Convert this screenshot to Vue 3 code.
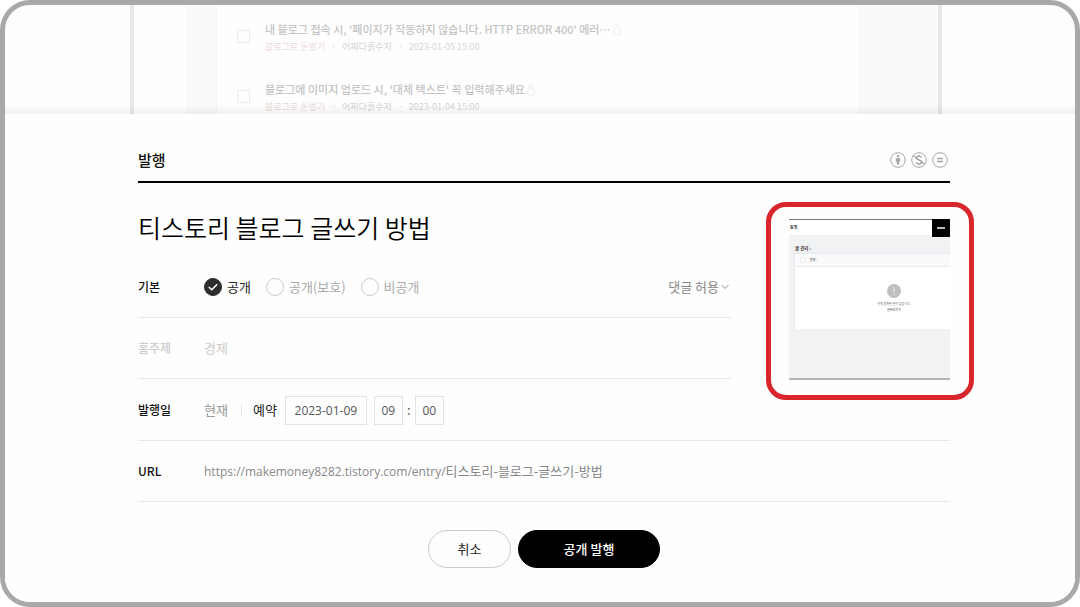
<template>
  <div class="frame">
    <section class="backdrop" aria-label="글 목록">
      <div class="board">
        <ul class="post-list">
          <li v-for="p in posts" :key="p.date" class="post">
            <input type="checkbox" class="post-check" :aria-label="p.title" />
            <div class="post-body">
              <div class="post-title">
                {{ p.title }}
                <svg class="lock" width="8" height="12" viewBox="0 0 8 12" fill="none" stroke="#eee">
                  <rect x="1" y="4" width="6" height="7" rx="1" />
                  <path d="M2 4V2.5a2 2 0 0 1 4 0V4" />
                </svg>
              </div>
              <div class="post-meta">
                <span class="category">블로그로 돈벌기</span>
                <span class="dot">·</span>
                <span>어쩌다흙수저</span>
                <span class="dot">·</span>
                <span>{{ p.date }}</span>
              </div>
            </div>
          </li>
        </ul>
      </div>
    </section>

    <form class="publish" @submit.prevent>
      <div class="inner">
        <header class="head">
          <h1 class="head-title">발행</h1>
          <div class="ccl">
            <svg width="16" height="16" viewBox="0 0 16 16" fill="none" stroke="#a6a6a6">
              <circle cx="8" cy="8" r="7.3" />
              <circle cx="8" cy="4.3" r="1.2" fill="#a6a6a6" stroke="none" />
              <path d="M5.8 6.2h4.4v3.2h-1v3.2H6.8V9.4h-1z" fill="#a6a6a6" stroke="none" />
            </svg>
            <svg width="16" height="16" viewBox="0 0 16 16" fill="none" stroke="#a6a6a6">
              <circle cx="8" cy="8" r="7.3" />
              <path d="M10.6 5.6C10.2 4.6 9.2 4.2 8 4.2c-1.5 0-2.5.7-2.5 1.8C5.5 8.4 10.7 7.4 10.7 10c0 1.2-1.2 1.9-2.7 1.9-1.4 0-2.5-.6-2.8-1.7M8 2.8v1.4M8 11.9v1.3" stroke-width="1.4" />
              <path d="M2.2 3.6l11.4 8.6" stroke-width="1.2" />
            </svg>
            <svg width="16" height="16" viewBox="0 0 16 16" fill="none" stroke="#a6a6a6">
              <circle cx="8" cy="8" r="7.3" />
              <path d="M5 6.5h6M5 9.5h6" stroke-width="1.3" />
            </svg>
          </div>
        </header>

        <div class="top">
          <div class="top-main">
            <h2 class="post-name">티스토리 블로그 글쓰기 방법</h2>
            <div class="row">
              <span class="label">기본</span>
              <div class="radios">
                <label v-for="o in options" :key="o.value" class="radio" :class="{ on: visibility === o.value }">
                  <input v-model="visibility" type="radio" name="visibility" :value="o.value" />
                  <svg v-if="visibility === o.value" class="check" width="18" height="18" viewBox="0 0 18 18" fill="none" stroke="#fff" stroke-width="1.5">
                    <path d="M4.8 9l3 2.8 5.4-5.6" />
                  </svg>
                  {{ o.text }}
                </label>
              </div>
              <div class="comment">
                <select v-model="comment" aria-label="댓글">
                  <option>댓글 허용</option>
                  <option>댓글 비허용</option>
                </select>
                <svg width="8" height="6" viewBox="0 0 8 6" fill="none" stroke="#909090">
                  <path d="M.5 1L4 4.5 7.5 1" />
                </svg>
              </div>
            </div>
            <div class="row disabled">
              <span class="label">홈주제</span>
              <span class="value">경제</span>
            </div>
          </div>

          <div class="thumb">
            <svg width="161" height="161" viewBox="0 0 161 161" role="img" aria-label="대표 이미지">
              <rect width="161" height="161" fill="#f1f2f4" />
              <rect width="161" height="16" fill="#fff" />
              <rect width="161" height="1" fill="#777" />
              <text x="1" y="10" font-size="4" font-weight="700" fill="#333">토핑</text>
              <text x="6" y="31" font-size="4.5" font-weight="700" fill="#333">글 관리 ›</text>
              <rect x="5" y="34" width="156" height="76" fill="#fff" />
              <rect x="5" y="34" width="156" height="13" fill="#f9fafb" />
              <path d="M5 34.5h156M5 47.5h156M5.5 34v76" stroke="#e9ebee" fill="none" />
              <rect x="12" y="39" width="4" height="4" fill="#fff" stroke="#ddd" stroke-width=".5" />
              <text x="21" y="42" font-size="3" fill="#444">변경 ›</text>
              <circle cx="105" cy="72" r="7" fill="#c0c0c0" />
              <path d="M105 68v5M105 74.5v1.5" stroke="#eee" />
              <text x="105" y="86" font-size="3" text-anchor="middle" fill="#666">아직 등록된 글이 없습니다.</text>
              <text x="105" y="92" font-size="3" text-anchor="middle" fill="#333">글쓰러가기</text>
              <rect y="159" width="161" height="2" fill="#b2b7b5" />
            </svg>
            <button type="button" class="thumb-del" aria-label="대표 이미지 삭제"></button>
            <div class="marker"></div>
          </div>
        </div>

        <div class="row">
          <span class="label">발행일</span>
          <div class="when">
            <button type="button" class="now">현재</button>
            <button type="button" class="reserve">예약</button>
            <input v-model="date" class="date" aria-label="예약 날짜" />
            <input v-model="hour" class="time" aria-label="시" />
            <span class="colon">:</span>
            <input v-model="minute" class="time" aria-label="분" />
          </div>
        </div>
        <div class="row">
          <span class="label">URL</span>
          <a class="url" href="#"><span class="base">https://makemoney8282.tistory.com/entry/</span>티스토리-블로그-글쓰기-방법</a>
        </div>

        <div class="actions">
          <button type="button" class="btn">취소</button>
          <button type="submit" class="btn primary">공개 발행</button>
        </div>
      </div>
    </form>
  </div>
</template>

<script setup>
import { ref } from 'vue'

const posts = [
  { title: "내 블로그 접속 시, '페이지가 작동하지 않습니다. HTTP ERROR 400' 에러…", date: '2023-01-05 15:00' },
  { title: "블로그에 이미지 업로드 시, '대체 텍스트' 꼭 입력해주세요", date: '2023-01-04 15:00' }
]
const options = [
  { value: 'public', text: '공개' },
  { value: 'protected', text: '공개(보호)' },
  { value: 'private', text: '비공개' }
]
const visibility = ref('public')
const comment = ref('댓글 허용')
const date = ref('2023-01-09')
const hour = ref('09')
const minute = ref('00')
</script>

<style>
body { background: #fff; }
</style>

<style scoped>
.frame, .frame * { box-sizing: border-box; }
.frame { min-height: 100vh; border: 5px solid #a9a9a9; border-radius: 30px; overflow: hidden; display: flex; flex-direction: column; background: #fefefe; color: #111; font-family: "Noto Sans CJK KR", sans-serif; font-size: 13px; line-height: 20px; }
button, input, select { font: inherit; color: inherit; margin: 0; padding: 0; border: 0; background: none; appearance: none; border-radius: 0; }

.backdrop { height: 109px; overflow: hidden; position: relative; padding-right: 8px; }
.backdrop::after { content: ""; position: absolute; left: 0; right: 0; bottom: 0; height: 10px; background: linear-gradient(rgba(0, 0, 0, 0), rgba(0, 0, 0, .05)); }
.board { width: 812px; max-width: 100%; height: 109px; margin: 0 auto; border: solid #e8e8e8; border-width: 0 4px; padding: 0 78px 0 52px; background: linear-gradient(90deg, #fefefe 52px, #fafafc 52px); }
.post-list { list-style: none; margin: 0 0 0 30px; padding: 2px 0 0; background: #fefefe; border: solid #f6f6f6; border-width: 0 1px; }
.post { height: 60px; display: flex; gap: 15px; padding: 12px 20px 0; border-bottom: 1px solid #f9f9f9; }
.post-check { width: 13px; height: 13px; border: 1px solid #ebebeb; flex: none; margin-top: 11px; }
.post-title { color: #c4c4c4; font-size: 11px; font-weight: 500; line-height: 20px; white-space: nowrap; }
.lock { vertical-align: -2px; }
.post-meta { display: flex; gap: 6px; color: #d4d4d4; font-size: 9px; line-height: 16px; white-space: nowrap; }
.category { color: #ecd9d9; }

.publish { flex: 1; background: #fefefe; padding-left: 8px; }
.inner { width: 812px; max-width: 100%; margin: 0 auto; }
.head { display: flex; align-items: center; justify-content: space-between; height: 69px; padding: 24px 2px 0 0; border-bottom: 2px solid #000; }
.head-title { margin: 0; font-size: 15px; font-weight: 500; line-height: 24px; }
.ccl { display: flex; gap: 5px; }
.top { display: flex; justify-content: space-between; }
.top-main { width: 593px; }
.post-name { margin: 0; padding: 25px 0 11px; font-size: 25px; font-weight: 350; line-height: 38px; color: #000; }
.row { display: flex; align-items: center; height: 61px; border-bottom: 1px solid #e8e8e8; }
.label { width: 66px; flex: none; font-size: 12px; font-weight: 500; }
.disabled { color: #ccc; }
.radios { display: flex; gap: 15px; }
.radio { display: flex; align-items: center; gap: 5px; position: relative; color: #aaa; }
.radio input { width: 18px; height: 18px; border: 1px solid #ccc; border-radius: 50%; }
.radio.on { color: #222; }
.radio.on input { background: #2d2d2d; border-color: #2d2d2d; }
.check { position: absolute; left: 0; top: 1px; pointer-events: none; }
.comment { display: flex; align-items: center; gap: 2px; margin-left: auto; padding-right: 2px; color: #888; }
.comment select { field-sizing: content; }

.thumb { position: relative; width: 161px; height: 161px; margin-top: 36px; }
.thumb > svg { display: block; }
.thumb-del { position: absolute; right: 0; top: 0; width: 18px; height: 18px; background: #000; }
.thumb-del::before { content: ""; display: block; width: 8px; height: 2px; margin: 0 auto; background: #bbb; }
.marker { position: absolute; top: -17px; right: -24px; bottom: -20px; left: -23px; border: 5px solid #d9252c; border-radius: 20px; pointer-events: none; }

.when { display: flex; align-items: center; color: #555; }
.now { color: #999; padding-right: 13px; }
.reserve { color: #222; padding: 0 8px 0 12px; position: relative; }
.reserve::before { content: ""; position: absolute; left: 0; top: 4px; height: 12px; border-left: 1px solid #e4e4e4; }
.date, .time { height: 29px; border: 1px solid #e2e2e2; text-align: center; font-family: "Open Sans", sans-serif; font-size: 12px; }
.date { width: 82px; margin-right: 7px; }
.time { width: 29px; }
.colon { width: 12px; text-align: center; }
.url { color: #888; text-decoration: none; }
.base { font-family: "Open Sans", sans-serif; font-size: 12px; }

.actions { display: flex; justify-content: center; gap: 7px; padding-top: 28px; }
.btn { width: 83px; height: 38px; border: 1px solid #ccc; border-radius: 19px; color: #222; }
.primary { width: 142px; background: #000; border-color: #000; color: #fff; font-weight: 500; }
</style>
